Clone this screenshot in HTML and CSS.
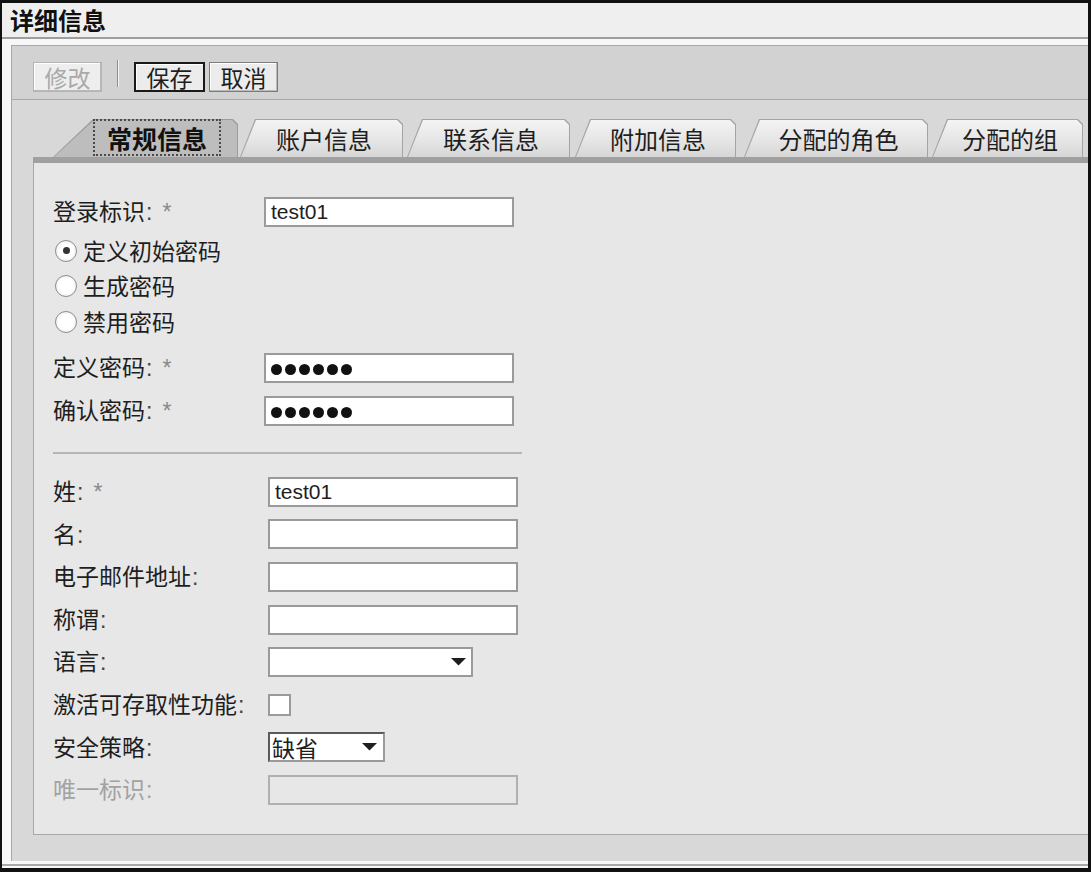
FILE: index.html
```html
<!DOCTYPE html>
<html lang="zh-CN">
<head>
<meta charset="utf-8">
<title>详细信息</title>
<link rel="stylesheet" href="styles.css">
</head>
<body>
<div class="window">
  <div class="titlebar">详细信息</div>
  <div class="frame">
    <div class="panel">
      <div class="toolbar">
        <button class="btn btn-edit" disabled>修改</button>
        <span class="tb-sep"></span>
        <button class="btn btn-save">保存</button>
        <button class="btn btn-cancel">取消</button>
      </div>
      <div class="tabarea">
        <div class="tabs">
          <div class="tab tab-1 tab-active"><span class="tab-label">常规信息</span></div>
          <div class="tab tab-2"><span class="tab-label">账户信息</span></div>
          <div class="tab tab-3"><span class="tab-label">联系信息</span></div>
          <div class="tab tab-4"><span class="tab-label">附加信息</span></div>
          <div class="tab tab-5"><span class="tab-label">分配的角色</span></div>
          <div class="tab tab-6"><span class="tab-label">分配的组</span></div>
        </div>
        <div class="tabbar"></div>
        <div class="content">
          <div class="section sec1">
            <div class="row">
              <div class="label">登录标识<span class="colon">:</span><span class="req">*</span></div>
              <input class="input" type="text" value="test01">
            </div>
            <div class="radio-row"><span class="radio checked"></span><span class="radio-text">定义初始密码</span></div>
            <div class="radio-row"><span class="radio"></span><span class="radio-text">生成密码</span></div>
            <div class="radio-row"><span class="radio"></span><span class="radio-text">禁用密码</span></div>
            <div class="row row-pw">
              <div class="label">定义密码<span class="colon">:</span><span class="req">*</span></div>
              <div class="input pw"><span class="dot"></span><span class="dot"></span><span class="dot"></span><span class="dot"></span><span class="dot"></span><span class="dot"></span></div>
            </div>
            <div class="row">
              <div class="label">确认密码<span class="colon">:</span><span class="req">*</span></div>
              <div class="input pw"><span class="dot"></span><span class="dot"></span><span class="dot"></span><span class="dot"></span><span class="dot"></span><span class="dot"></span></div>
            </div>
          </div>
          <div class="divider"></div>
          <div class="section sec2">
            <div class="row">
              <div class="label">姓<span class="colon">:</span><span class="req">*</span></div>
              <input class="input" type="text" value="test01">
            </div>
            <div class="row">
              <div class="label">名<span class="colon">:</span></div>
              <input class="input" type="text" value="">
            </div>
            <div class="row">
              <div class="label">电子邮件地址<span class="colon">:</span></div>
              <input class="input" type="text" value="">
            </div>
            <div class="row">
              <div class="label">称谓<span class="colon">:</span></div>
              <input class="input" type="text" value="">
            </div>
            <div class="row">
              <div class="label">语言<span class="colon">:</span></div>
              <div class="select select-lang"><span class="select-text"></span><svg class="arrow" width="15" height="8" viewBox="0 0 15 8"><polygon points="0,0 15,0 7.5,7.5" fill="#1e1e1e"/></svg></div>
            </div>
            <div class="row">
              <div class="label">激活可存取性功能<span class="colon">:</span></div>
              <span class="checkbox"></span>
            </div>
            <div class="row">
              <div class="label">安全策略<span class="colon">:</span></div>
              <div class="select select-policy"><span class="select-text">缺省</span><svg class="arrow" width="15" height="8" viewBox="0 0 15 8"><polygon points="0,0 15,0 7.5,7.5" fill="#1e1e1e"/></svg></div>
            </div>
            <div class="row row-disabled">
              <div class="label">唯一标识<span class="colon">:</span></div>
              <input class="input input-disabled" type="text" value="" disabled>
            </div>
          </div>
        </div>
      </div>
    </div>
  </div>
</div>
</body>
</html>
```

FILE: styles.css
```css
* { box-sizing: border-box; }
html, body { margin: 0; padding: 0; }
body {
  width: 1091px;
  height: 872px;
  overflow: hidden;
  background: #ffffff;
  font-family: "Noto Sans CJK SC", "Liberation Sans", sans-serif;
  color: #1e1e1e;
}

.window {
  width: 1091px;
  height: 872px;
  border-style: solid;
  border-color: #111111;
  border-width: 3px 3px 4px 2px;
  padding-bottom: 2px;
  display: flex;
  flex-direction: column;
  background: #f7f7f7;
}

.titlebar {
  flex: none;
  height: 36px;
  background: #efefef;
  border-bottom: 2px solid #9e9e9e;
  padding-left: 8px;
  font-size: 24px;
  font-weight: 700;
  line-height: 34px;
  color: #111111;
}

.frame {
  flex: 1;
  display: flex;
  flex-direction: column;
  padding: 6px 0 3px 9px;
  background: #f7f7f7;
  border-bottom: 2px solid #a8a8a8;
}

.panel {
  flex: 1;
  display: flex;
  flex-direction: column;
  background: #d8d8d8;
  border-top: 1px solid #a8a8a8;
  border-left: 1px solid #a8a8a8;
}

/* toolbar */
.toolbar {
  flex: none;
  height: 54px;
  display: flex;
  align-items: flex-start;
  padding: 16px 0 0 21px;
  background: #d2d2d2;
  border-bottom: 1px solid #a9a9a9;
}
.btn {
  height: 30px;
  width: 70px;
  padding: 0;
  margin: 0;
  font-family: "Noto Sans CJK SC", sans-serif;
  font-size: 23px;
  line-height: 1;
  color: #1e1e1e;
  background: #ececec;
  border: 1px solid #7c7c7c;
  box-shadow: inset -1px -1px 0 #b9b9b9, inset 1px 1px 0 #ffffff;
  display: flex;
  align-items: center;
  justify-content: center;
}
.btn-edit {
  width: 69px;
  color: #a9a9a9;
  border-color: #b4b4b4;
  background: #eeeeee;
}
.tb-sep {
  width: 2px;
  height: 27px;
  margin: -2px 15px 0 15px;
  border-left: 1px solid #8e8e8e;
  border-right: 1px solid #f4f4f4;
}
.btn-save {
  width: 71px;
  border: 2px solid #1a1a1a;
  box-shadow: inset 1px 1px 0 #ffffff;
}
.btn-cancel {
  width: 69px;
  margin-left: 4px;
}

/* tabs */
.tabarea {
  flex: 1;
  display: flex;
  flex-direction: column;
  padding: 19px 0 26px 21px;
}
.tabs {
  flex: none;
  height: 38px;
  display: flex;
  align-items: flex-end;
}
.tab {
  --s: 15px;
  position: relative;
  flex: none;
  height: 38px;
  display: flex;
  align-items: center;
  justify-content: center;
  padding-left: var(--s);
  padding-right: 10px;
  font-size: 24px;
  color: #1e1e1e;
  background: #a4a4a4;
  clip-path: polygon(0 100%, var(--s) 0, calc(100% - 5px) 0, 100% 5px, 100% 100%);
}
.tab::before {
  content: "";
  position: absolute;
  top: 1px;
  left: 1px;
  right: 1px;
  bottom: 0;
  background: linear-gradient(#f4f4f4, #e4e4e4 60%, #d6d6d6);
  clip-path: polygon(0 100%, var(--s) 0, calc(100% - 5px) 0, 100% 5px, 100% 100%);
}
.tab-label {
  position: relative;
  white-space: nowrap;
}
.tab-1 { --s: 40px; width: 185px; margin-left: 20px; }
.tab-2 { width: 163px; margin-left: 2px; }
.tab-3 { width: 163px; margin-left: 4px; }
.tab-4 { width: 161px; margin-left: 5px; }
.tab-5 { width: 184px; margin-left: 8px; }
.tab-6 { width: 151px; margin-left: 4px; }

.tab-active {
  background: #9c9c9c;
  justify-content: flex-start;
  align-items: flex-start;
  padding-right: 0;
}
.tab-active::before {
  background: #bdbdbd;
}
.tab-active .tab-label {
  width: 128px;
  height: 37px;
  border: 2px dotted #4a4a4a;
  font-size: 25px;
  font-weight: 700;
  color: #111111;
  display: flex;
  align-items: center;
  justify-content: center;
}

.tabbar {
  flex: none;
  height: 6px;
  background: #a0a0a0;
}

/* content */
.content {
  flex: 1;
  background: #e7e7e7;
  border-left: 1px solid #a8a8a8;
  border-bottom: 1px solid #a8a8a8;
  padding: 27px 0 0 19px;
}

.row {
  display: flex;
  align-items: center;
  height: 43px;
}
.sec2 .row { height: 42.6px; }
.row-pw { margin-top: 7px; }

.label {
  flex: none;
  width: 211px;
  font-size: 23px;
  line-height: 1.2;
  color: #1e1e1e;
  white-space: nowrap;
}
.sec2 .label { width: 215px; }
.colon {
  font-family: "Liberation Sans", sans-serif;
  color: #444444;
  margin-left: 1px;
}
.req {
  font-family: "Liberation Sans", sans-serif;
  color: #8a8a8a;
  margin-left: 10px;
}
.row-disabled .label,
.row-disabled .colon { color: #a2a2a2; }

.input {
  flex: none;
  width: 250px;
  height: 30px;
  margin: 0;
  padding: 0 5px;
  border: 2px solid #9a9a9a;
  background: #ffffff;
  font-family: "Liberation Sans", sans-serif;
  font-size: 21px;
  color: #1e1e1e;
  outline: none;
}
.input-disabled {
  background: #e7e7e7;
  border-color: #b0b0b0;
}
.pw {
  display: flex;
  align-items: center;
  gap: 3px;
  padding-top: 2px;
}
.dot {
  width: 11px;
  height: 11px;
  border-radius: 50%;
  background: #111111;
}

.radio-row {
  display: flex;
  align-items: center;
  height: 35.5px;
  padding-left: 2px;
  gap: 6px;
}
.radio {
  flex: none;
  width: 22px;
  height: 22px;
  border-radius: 50%;
  border: 1px solid #8e8e8e;
  background: radial-gradient(circle, #ffffff 50%, #e0e0e0 100%);
  display: flex;
  align-items: center;
  justify-content: center;
}
.radio.checked::after {
  content: "";
  width: 7px;
  height: 7px;
  border-radius: 50%;
  background: #333333;
}
.radio-text {
  font-size: 23px;
  line-height: 1.2;
}

.divider {
  width: 469px;
  height: 2px;
  background: #b6b6b6;
  margin: 19px 0 17px 0;
}

.select {
  flex: none;
  height: 30px;
  display: flex;
  align-items: center;
  justify-content: space-between;
  background: #ffffff;
  border: 2px solid #9a9a9a;
  padding: 0 5px 0 2px;
}
.select-lang { width: 205px; }
.select-policy {
  width: 117px;
  border-color: #5a5a5a #9a9a9a #9a9a9a #5a5a5a;
  padding-right: 6px;
}
.select-text {
  font-size: 23px;
  line-height: 1;
  color: #1e1e1e;
}
.arrow { display: block; }

.checkbox {
  flex: none;
  width: 23px;
  height: 22px;
  border: 2px solid #9a9a9a;
  background: #ffffff;
}
```
